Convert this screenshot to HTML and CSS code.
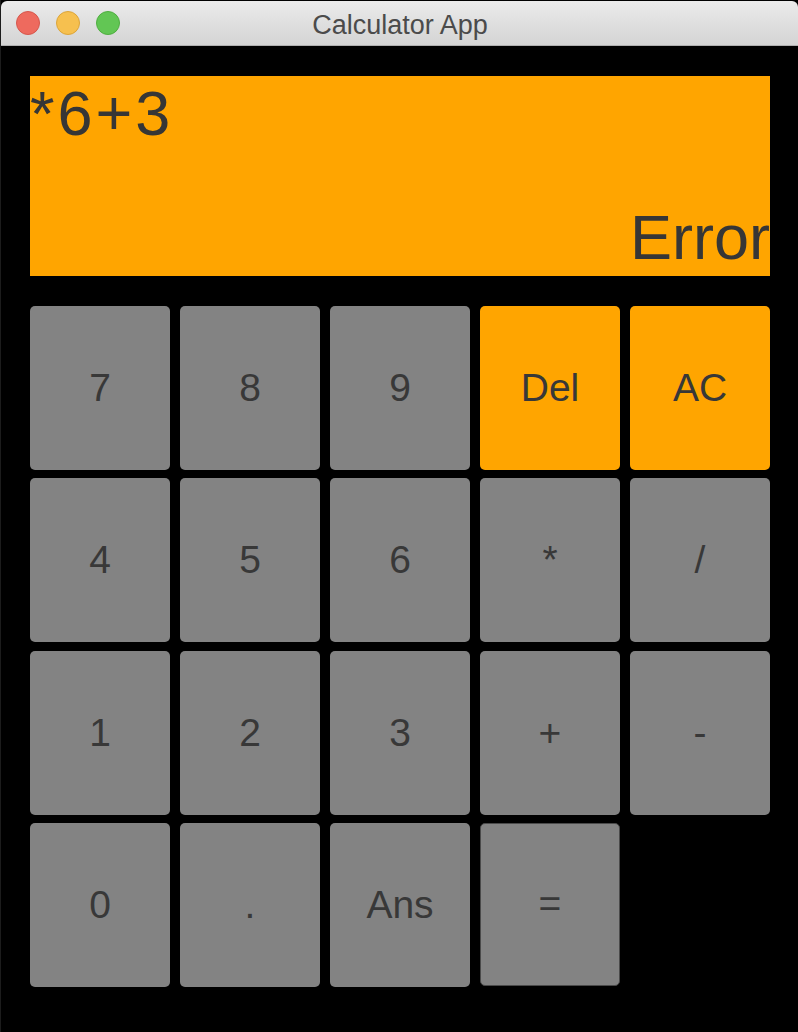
FILE: index.html
```html
<!DOCTYPE html>
<html lang="en">
<head>
<meta charset="utf-8">
<title>Calculator App</title>
<link rel="stylesheet" href="styles.css">
</head>
<body>
<div class="window">
  <div class="titlebar">
    <div class="lights">
      <span class="light red"></span>
      <span class="light yellow"></span>
      <span class="light green"></span>
    </div>
    <div class="title">Calculator App</div>
  </div>
  <div class="content">
    <div class="display">
      <div class="expr">*6+3</div>
      <div class="result">Error</div>
    </div>
    <div class="keypad">
      <button class="key">7</button>
      <button class="key">8</button>
      <button class="key">9</button>
      <button class="key accent">Del</button>
      <button class="key accent">AC</button>
      <button class="key">4</button>
      <button class="key">5</button>
      <button class="key">6</button>
      <button class="key">*</button>
      <button class="key">/</button>
      <button class="key">1</button>
      <button class="key">2</button>
      <button class="key">3</button>
      <button class="key">+</button>
      <button class="key">-</button>
      <button class="key">0</button>
      <button class="key">.</button>
      <button class="key">Ans</button>
      <button class="key equals">=</button>
    </div>
  </div>
</div>
</body>
</html>
```
FILE: styles.css
```css
* { box-sizing: border-box; }
html, body {
  margin: 0;
  padding: 0;
  background: #000;
  width: 798px;
  height: 1032px;
  overflow: hidden;
}
body {
  font-family: "Liberation Sans", Arial, sans-serif;
}
.window {
  width: 798px;
  height: 1032px;
  background: #000;
  border-left: 1px solid #1c1c1c;
  display: flex;
  flex-direction: column;
}
.titlebar {
  height: 45px;
  flex: none;
  margin-top: 1px;
  background: linear-gradient(#ebebeb, #d4d4d4);
  border-bottom: 1px solid #b0b0b0;
  border-radius: 6px 6px 0 0;
  position: relative;
  display: flex;
  align-items: center;
  justify-content: center;
}
.lights {
  position: absolute;
  left: 15px;
  top: 10px;
  display: flex;
  gap: 16px;
}
.light {
  width: 24px;
  height: 24px;
  border-radius: 50%;
  display: block;
}
.red { background: #ee6a5e; border: 1px solid #d6574c; }
.yellow { background: #f6c04f; border: 1px solid #dca53a; }
.green { background: #62c654; border: 1px solid #4fae40; }
.title {
  font-size: 27px;
  color: #4b4b4b;
  margin-top: 4px;
  margin-left: 1px;
}
.content {
  padding: 30px 28px 0 29px;
}
.display {
  height: 200px;
  background: #ffa500;
  display: flex;
  flex-direction: column;
  justify-content: space-between;
  color: #363636;
  font-size: 63px;
  line-height: 72px;
  overflow: hidden;
}
.expr {
  padding-top: 1px;
  text-align: left;
  white-space: nowrap;
  letter-spacing: 3px;
}
.result {
  text-align: right;
  white-space: nowrap;
  margin-bottom: 3px;
}
.keypad {
  margin-top: 30px;
  height: 681px;
  display: grid;
  grid-template-columns: repeat(5, 140px);
  grid-template-rows: repeat(4, 1fr);
  column-gap: 10px;
  row-gap: 8.33px;
}
.key {
  border: none;
  border-radius: 5px;
  background: #838383;
  color: #383838;
  font-family: "Liberation Sans", Arial, sans-serif;
  font-size: 39px;
  padding: 0;
  margin: 0;
  display: flex;
  align-items: center;
  justify-content: center;
}
.key.accent {
  background: #ffa500;
}
.key.equals {
  border: 1px solid #4a4a4a;
  margin-bottom: 1px;
}
```
